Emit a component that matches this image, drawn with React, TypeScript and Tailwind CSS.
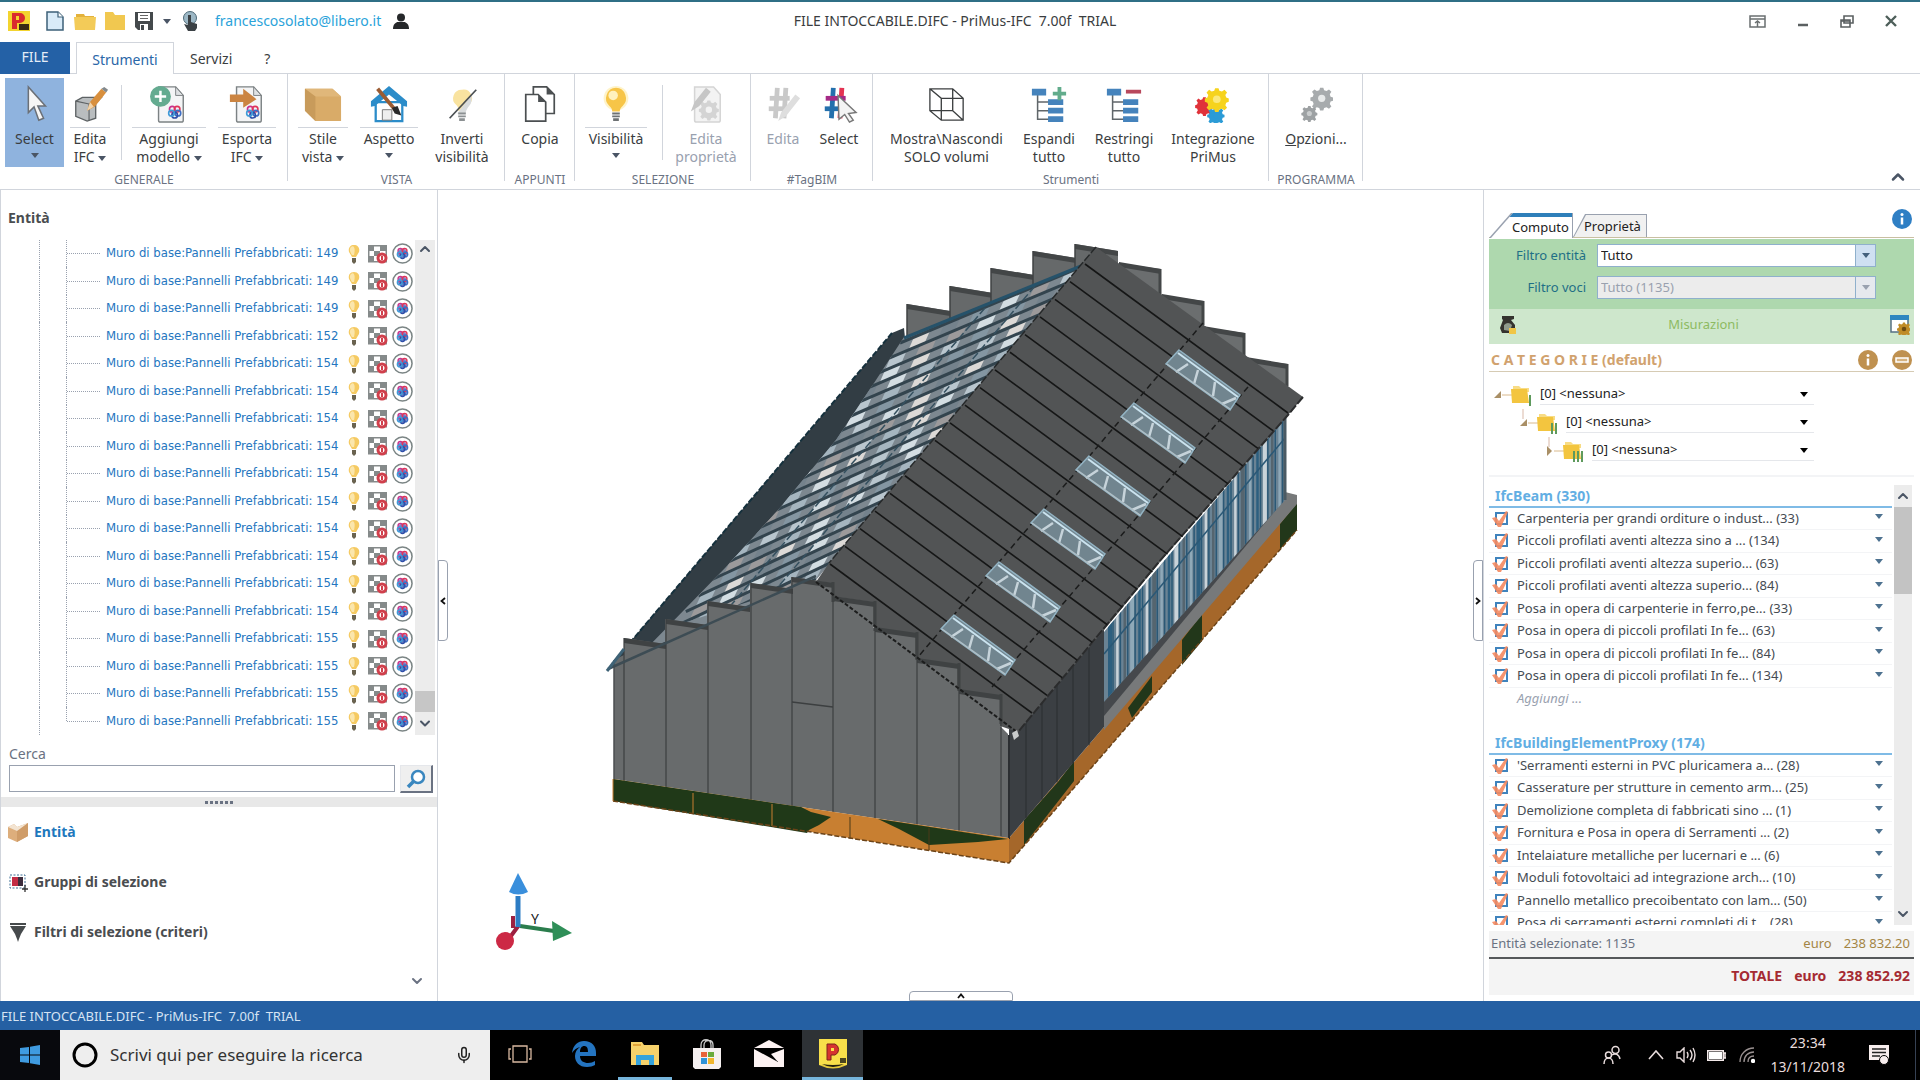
import { ReactNode } from 'react'
import { ChevronDown, ChevronUp, Mic } from 'lucide-react'

type Item = { text: string; count: number }

const walls = [149, 149, 149, 152, 154, 154, 154, 154, 154, 154, 154, 154, 154, 154, 155, 155, 155, 155]

const beams: Item[] = [
  { text: 'Carpenteria per grandi orditure o indust...', count: 33 },
  { text: 'Piccoli profilati aventi altezza sino a ...', count: 134 },
  { text: 'Piccoli profilati aventi altezza superio...', count: 63 },
  { text: 'Piccoli profilati aventi altezza superio...', count: 84 },
  { text: 'Posa in opera di carpenterie in ferro,pe...', count: 33 },
  { text: 'Posa in opera di piccoli profilati In fe...', count: 63 },
  { text: 'Posa in opera di piccoli profilati In fe...', count: 84 },
  { text: 'Posa in opera di piccoli profilati In fe...', count: 134 },
]

const proxies: Item[] = [
  { text: "'Serramenti esterni in PVC pluricamera a...", count: 28 },
  { text: 'Casserature per strutture in cemento arm...', count: 25 },
  { text: 'Demolizione completa di fabbricati sino ...', count: 1 },
  { text: 'Fornitura e Posa in opera di Serramenti ...', count: 2 },
  { text: 'Intelaiature metalliche per lucernari e ...', count: 6 },
  { text: 'Moduli fotovoltaici ad integrazione arch...', count: 10 },
  { text: 'Pannello metallico precoibentato con lam...', count: 50 },
  { text: 'Posa di serramenti esterni completi di t...', count: 28 },
]

const Caret = ({ className = 'fill-gray-600' }: { className?: string }) => (
  <svg viewBox="0 0 8 5" className={`inline-block h-[5px] w-2 align-middle ${className}`}>
    <path d="M0 0h8L4 5z" />
  </svg>
)

/* ---------- ribbon icons ---------- */

const Rosette = ({ x, y, s = 1 }: { x: number; y: number; s?: number }) => (
  <g transform={`translate(${x} ${y}) scale(${s})`} fill="none" strokeWidth="2">
    <circle cx="-3" cy="-3" r="3.5" stroke="#c8328c" />
    <circle cx="3" cy="-3" r="3.5" stroke="#e0355a" />
    <circle cx="4" cy="2" r="3.5" stroke="#3c6fc4" />
    <circle cx="0" cy="4.5" r="3.5" stroke="#2f4fa8" />
    <circle cx="-4" cy="2" r="3.5" stroke="#3f9bd8" />
  </g>
)

const Ico = ({ children }: { children: ReactNode }) => (
  <svg viewBox="0 0 40 40" className="h-[38px] w-[38px]">
    {children}
  </svg>
)

const Cursor = () => (
  <Ico>
    <path d="M13 2v27l6-6 5 14 5-2-6-13h8z" fill="#f6f6f6" stroke="#6b7077" strokeWidth="1.6" />
  </Ico>
)

const BoxPencil = () => (
  <Ico>
    <path d="M5 17l7-4h20l-6 6v16l-9 3-12-5z" fill="#b9bdbf" stroke="#5d6264" strokeWidth="1.4" />
    <path d="M5 17l14 3 12-6M19 20v17" stroke="#5d6264" strokeWidth="1.2" fill="none" />
    <path d="M17 27l3-9L32 4l5 4-12 15z" fill="#d88f3d" />
    <path d="M32 4l3-2 4 3-2 3z" fill="#83898c" />
    <path d="M17 27l3-9 4 5z" fill="#f2d3a8" />
  </Ico>
)

const Sheet = () => (
  <>
    <path d="M9 2h18l8 9v26a2 2 0 0 1-2 2H11a2 2 0 0 1-2-2z" fill="#f4f5f6" stroke="#7c8284" strokeWidth="1.5" />
    <path d="M27 2v9h8z" fill="#dfe2e4" stroke="#7c8284" />
    <Rosette x={26} y={28} s={0.85} />
  </>
)

const AddModel = () => (
  <Ico>
    <Sheet />
    <circle cx="11" cy="12" r="11" fill="#64ab90" />
    <path d="M11 6v12M5 12h12" stroke="#fff" strokeWidth="2.6" />
  </Ico>
)

const ExportIfc = () => (
  <Ico>
    <Sheet />
    <path d="M2 10h14V4l14 11-14 9v-6H2z" fill="#cb8441" />
  </Ico>
)

const StyleBox = () => (
  <Ico>
    <path d="M1 4h29l9 8v26H12L1 27z" fill="#d9ab68" />
    <path d="M1 4h29l9 8H12z" fill="#e0b77a" />
    <path d="M1 4l11 8v26L1 27z" fill="#c89b5b" />
  </Ico>
)

const House = () => (
  <Ico>
    <path d="M6 18h28v20H6z" fill="#fff" stroke="#2b8cc9" strokeWidth="2.4" />
    <path d="M20 1L1 17v6l4-1 15-12 15 12 4 1v-6z" fill="#2b8cc9" />
    <path d="M13 26h10v11H13z" fill="#eee" stroke="#777" />
    <path d="M8 4l20 24" stroke="#9b5c33" strokeWidth="4" />
    <path d="M23 24l6-2 4 10-7-2z" fill="#2a2a2a" />
  </Ico>
)

const Bulb = () => (
  <Ico>
    <circle cx="20" cy="14" r="13" fill="#fdeeb4" opacity=".7" />
    <path d="M20 3a11 11 0 0 0-7 19c2 2 3 3 3 6h8c0-3 1-4 3-6A11 11 0 0 0 20 3z" fill="#f7c548" />
    <circle cx="17" cy="11" r="5" fill="#fff1bd" />
    <path d="M16 29h8v2h-8zM16 32h8v2h-8zM17 35h6v3h-6z" fill="#6d7173" />
  </Ico>
)

const InvertBulb = () => (
  <Ico>
    <path d="M20 5a9 9 0 0 0-6 16c2 2 2 3 2 6h8c0-3 1-4 3-6A9 9 0 0 0 20 5z" fill="#f9e3a0" />
    <path d="M30 10L15 30h9c0-6 5-8 6-13z" fill="#d9dcdd" />
    <path d="M16 29h8v2h-8zM16 32h8v2h-8zM17 35h6v3h-6z" fill="#8b9092" />
    <path d="M35 5L7 35" stroke="#4a4f52" strokeWidth="1.8" />
  </Ico>
)

const Copy = () => (
  <Ico>
    <path d="M13 2h14l8 8v20H13z" fill="#fff" stroke="#4b4f51" strokeWidth="1.8" />
    <path d="M27 2v8h8z" fill="#4b4f51" />
    <path d="M5 10h13l8 8v20H5z" fill="#fff" stroke="#4b4f51" strokeWidth="1.8" />
    <path d="M18 10v8h8z" fill="#4b4f51" />
  </Ico>
)

const cog = 'M-2-10h4l1 3 3 1 3-2 3 3-2 3 1 3 3 1v4l-3 1-1 3 2 3-3 3-3-2-3 1-1 3h-4l-1-3-3-1-3 2-3-3 2-3-1-3-3-1v-4l3-1 1-3-2-3 3-3 3 2 3-1z'
const Cog = ({ x, y, s, fill, hole = '#fff' }: { x: number; y: number; s: number; fill: string; hole?: string }) => (
  <g transform={`translate(${x} ${y}) scale(${s})`}>
    <path d={cog} fill={fill} transform="translate(0 -3)" />
    <circle r="4.5" fill={hole} />
  </g>
)

const EditProps = () => (
  <Ico>
    <path d="M8 2h20l7 8v27a2 2 0 0 1-2 2H10a2 2 0 0 1-2-2z" fill="#f3f3f3" stroke="#d5d5d5" strokeWidth="1.6" />
    <Cog x={23} y={26} s={0.75} fill="#d4d4d4" hole="#f3f3f3" />
    <path d="M4 28l4-10L20 3l5 4L13 22z" fill="#c6c6c6" />
  </Ico>
)

const Hash = ({ a, b, c }: { a: string; b: string; c: string }) => (
  <>
    <path d="M14 3l-2 32" stroke={a} strokeWidth="5" />
    <path d="M23 3l-2 32" stroke={b} strokeWidth="5" />
    <path d="M6 14h21" stroke={c} strokeWidth="5" />
    <path d="M5 25h21" stroke={a} strokeWidth="5" />
  </>
)

const HashEdit = () => (
  <Ico>
    <Hash a="#c9c9c9" b="#c9c9c9" c="#c9c9c9" />
    <path d="M15 38l3-9L33 10l5 4-15 19z" fill="#dedede" />
  </Ico>
)

const HashSelect = () => (
  <Ico>
    <Hash a="#2470ad" b="#e43352" c="#a52a86" />
    <path d="M19 11l19 18-8 1 5 7-4 2-5-8-6 5z" fill="#f4f4f4" stroke="#777" strokeWidth="1.5" />
  </Ico>
)

const Cube = () => (
  <Ico>
    <path
      d="M2 4h24l11 10v23H14L2 27zM26 4v23l11 10M2 27h24M2 4l12 10h23M14 14v23"
      fill="none"
      stroke="#3c3f40"
      strokeWidth="1.4"
    />
  </Ico>
)

const Tree = ({ children }: { children: ReactNode }) => (
  <Ico>
    <path d="M8 9v27h12M8 18h12M8 27h12" fill="none" stroke="#60666a" strokeWidth="1.6" />
    <path d="M2 4h15v7H2zM19 15h16v6H19zM19 24h16v6H19zM19 33h16v6H19z" fill="#4583bc" />
    {children}
  </Ico>
)

const Integration = () => (
  <Ico>
    <Cog x={11} y={22} s={0.7} fill="#e0323a" hole="#e0323a" />
    <Cog x={23} y={32} s={0.65} fill="#2b9bd6" hole="#2b9bd6" />
    <Cog x={24} y={15} s={0.9} fill="#f6d31d" hole="#fbe97c" />
  </Ico>
)

const Options = () => (
  <Ico>
    <Cog x={26} y={14} s={0.85} fill="#a7abad" hole="#e8eaea" />
    <Cog x={13} y={30} s={0.6} fill="#9da1a3" hole="#c9cccd" />
  </Ico>
)

/* ---------- ribbon ---------- */

type ToolProps = {
  icon: ReactNode
  lines: ReactNode[]
  width: string
  menu?: 'split' | 'plain'
  active?: boolean
  disabled?: boolean
}

function Tool({ icon, lines, width, menu, active, disabled }: ToolProps) {
  return (
    <button
      disabled={disabled}
      className={`flex h-[89px] flex-col items-center text-sm leading-[18px] ${width} ${
        active ? 'bg-[#8fb3de]' : ''
      } ${disabled ? 'text-gray-400' : 'text-[#3a3d40]'}`}
    >
      <span className="flex h-[49px] items-center pt-[2px]">{icon}</span>
      <span className={`border-t px-1 pt-[2px] whitespace-nowrap ${menu === 'split' ? 'border-gray-300' : 'border-transparent'}`}>
        {lines.map((l, i) => (
          <span key={i} className="block">
            {l}
            {menu && i === 1 && <> <Caret /></>}
          </span>
        ))}
        {menu && lines.length === 1 && (
          <span className="block text-center leading-3">
            <Caret />
          </span>
        )}
      </span>
    </button>
  )
}

function Group({ label, width, pad = '', children }: { label: string; width: string; pad?: string; children: ReactNode }) {
  return (
    <section className={`relative flex flex-col pt-1 ${width}`}>
      <div className={`flex ${pad}`}>{children}</div>
      <h3 className="text-center text-xs leading-[25px] text-gray-500">{label}</h3>
      <span className="absolute top-0 right-0 h-[107px] w-px bg-gray-300" />
    </section>
  )
}

const Sep = () => <span className="mx-[5px] mt-[7px] h-[75px] w-px bg-gray-300" />

function Ribbon() {
  return (
    <div className="relative flex h-[116px] border-b border-gray-300">
      <Group label="GENERALE" width="w-[288px]" pad="pl-[5px]">
        <Tool icon={<Cursor />} lines={['Select']} width="w-[59px]" menu="plain" active />
        <Tool icon={<BoxPencil />} lines={['Edita', 'IFC']} width="w-[52px]" menu="split" />
        <Sep />
        <Tool icon={<AddModel />} lines={['Aggiungi', 'modello']} width="w-[84px]" menu="split" />
        <Tool icon={<ExportIfc />} lines={['Esporta', 'IFC']} width="w-[72px]" menu="split" />
      </Group>
      <Group label="VISTA" width="w-[217px]" pad="pl-1">
        <Tool icon={<StyleBox />} lines={['Stile', 'vista']} width="w-[62px]" menu="split" />
        <Tool icon={<House />} lines={['Aspetto']} width="w-[70px]" menu="split" />
        <Tool icon={<InvertBulb />} lines={['Inverti', 'visibilità']} width="w-[76px]" />
      </Group>
      <Group label="APPUNTI" width="w-[70px]">
        <Tool icon={<Copy />} lines={['Copia']} width="w-full" />
      </Group>
      <Group label="SELEZIONE" width="w-[176px]">
        <Tool icon={<Bulb />} lines={['Visibilità']} width="w-[82px]" menu="split" />
        <Sep />
        <Tool icon={<EditProps />} lines={['Edita', 'proprietà']} width="w-[76px]" disabled />
      </Group>
      <Group label="#TagBIM" width="w-[122px]" pad="pl-1">
        <Tool icon={<HashEdit />} lines={['Edita']} width="w-14" disabled />
        <Tool icon={<HashSelect />} lines={['Select']} width="w-14" />
      </Group>
      <Group label="Strumenti" width="w-[396px]" pad="pl-2">
        <Tool icon={<Cube />} lines={['Mostra\\Nascondi', 'SOLO volumi']} width="w-[131px]" />
        <Tool
          icon={
            <Tree>
              <path d="M31 2v14M24 9h14" stroke="#62ac8c" strokeWidth="4" />
            </Tree>
          }
          lines={['Espandi', 'tutto']}
          width="w-[74px]"
        />
        <Tool
          icon={
            <Tree>
              <path d="M22 7h16" stroke="#b8485c" strokeWidth="4" />
            </Tree>
          }
          lines={['Restringi', 'tutto']}
          width="w-[76px]"
        />
        <Tool icon={<Integration />} lines={['Integrazione', 'PriMus']} width="w-[102px]" />
      </Group>
      <Group label="PROGRAMMA" width="w-[94px]">
        <Tool
          icon={<Options />}
          lines={[
            <>
              <u>O</u>pzioni...
            </>,
          ]}
          width="w-full"
        />
      </Group>
      <button aria-label="Riduci barra" className="mr-3 mb-[2px] ml-auto self-end">
        <ChevronUp className="h-5 w-5 text-gray-600" strokeWidth={3} />
      </button>
    </div>
  )
}

function TitleBar() {
  return (
    <div className="grid h-[38px] grid-cols-3 items-center pr-[22px] pl-2">
      <div className="flex items-center">
        <svg viewBox="0 0 22 20" className="h-5 w-[22px]">
          <path d="M0 0h22v20H0z" fill="#f3d42f" />
          <path d="M4 2h8a5 5 0 0 1 0 10H9v6H4z" fill="#d92a2e" />
          <path d="M8 5h3v4H8z" fill="#f3d42f" />
          <path d="M11 13h10v6H11z" fill="#3a2b14" />
        </svg>
        <svg viewBox="0 0 18 20" className="ml-4 h-5 w-[18px]">
          <path d="M1 1h11l5 5v13H1z" fill="#d9ebf8" stroke="#3d6078" strokeWidth="1.5" />
          <path d="M12 1v5h5" fill="#fff" stroke="#3d6078" strokeWidth="1.2" />
        </svg>
        <svg viewBox="0 0 22 18" className="ml-[10px] h-[18px] w-[22px]">
          <path d="M2 2h8l1 2h9v4H2z" fill="#e3b23c" />
          <path d="M0 5h22l-1 13H1z" fill="#f3cb58" />
        </svg>
        <svg viewBox="0 0 22 18" className="ml-2 h-[18px] w-[22px]">
          <path d="M1 0h8l2 3h10v15H1z" fill="#f1c850" />
        </svg>
        <svg viewBox="0 0 18 18" className="ml-[9px] h-[18px] w-[18px]">
          <path d="M0 0h18v18H3l-3-3z" fill="#44494c" />
          <path d="M3 1h12v8H3z" fill="#fff" />
          <path d="M5 3h8v1H5zM5 6h8v1H5z" fill="#666" />
          <path d="M5 12h8v6H5z" fill="#fff" />
          <path d="M6 13h3v5H6z" fill="#44494c" />
        </svg>
        <span className="ml-[10px] flex items-center">
          <Caret />
        </span>
        <svg viewBox="0 0 18 20" className="ml-[10px] h-5 w-[18px]">
          <circle cx="9" cy="7" r="6.5" fill="#9db8c6" stroke="#4e6a78" />
          <path d="M7 4h3v7l6 2v4l-2 3H7l-4-7 4 1z" fill="#3b4145" />
        </svg>
        <a href="#account" className="ml-4 text-sm text-[#2ba3da]">
          francescosolato@libero.it
        </a>
        <svg viewBox="0 0 16 16" className="ml-3 h-4 w-4" fill="#26282a">
          <circle cx="8" cy="4.500" r="4" />
          <path d="M0 16c0-5 3-7 5-7h6c2 0 5 2 5 7z" />
        </svg>
      </div>
      <h1 className="pl-1 text-center text-sm whitespace-pre text-[#3a3d40]">FILE INTOCCABILE.DIFC - PriMus-IFC  7.00f  TRIAL</h1>
      <div className="flex items-center justify-end gap-[30px]">
        <button aria-label="Comprimi">
          <svg viewBox="0 0 17 13" className="block h-[13px] w-[17px]" fill="none" stroke="#6a6f70" strokeWidth="1.5">
            <path d="M1 1h15v11H1zM1 4h15M8.500 12V6M6 8l2.500-2L11 8" />
          </svg>
        </button>
        <button aria-label="Riduci a icona">
          <svg viewBox="0 0 14 14" className="block h-[14px] w-[14px]" stroke="#5b6061" strokeWidth="2.500">
            <path d="M2 11h10" />
          </svg>
        </button>
        <button aria-label="Ripristina">
          <svg viewBox="0 0 14 13" className="block h-[13px] w-[14px]" fill="#fff" stroke="#5b6061" strokeWidth="1.600">
            <path d="M4 1h9v7H4zM1 5h9v7H1z" />
            <path d="M1 6h9" />
          </svg>
        </button>
        <button aria-label="Chiudi">
          <svg viewBox="0 0 14 14" className="block h-[14px] w-[14px]" stroke="#4e5f5a" strokeWidth="2.400">
            <path d="M2 2l10 10M12 2L2 12" />
          </svg>
        </button>
      </div>
    </div>
  )
}

/* ---------- left panel ---------- */

const WallRow = ({ id, last }: { id: number; last: boolean }) => (
  <li className="flex h-[27px] items-center even:h-7">
    <span className="w-10 self-stretch border-r border-dotted border-gray-400" />
    <span className={`w-[27px] border-r border-dotted border-gray-400 ${last ? 'h-1/2 self-start' : 'self-stretch'}`} />
    <span className="w-[33px] border-t border-dotted border-gray-400" />
    <a href="#wall" className="ml-[6px] w-[235px] shrink-0 font-[DejaVu_Sans_Condensed,sans-serif] text-[13px] whitespace-nowrap text-[#2576c0]">
      Muro di base:Pannelli Prefabbricati: {id}
    </a>
    <svg viewBox="0 0 12 20" className="ml-[7px] h-5 w-3">
      <path d="M6 1C2 1 0 4 1 8l3 5h4l3-5c1-4-1-7-5-7z" fill="#f5ca62" />
      <path d="M3 3c2-2 5 0 3 8H4C2 8 1 5 3 3z" fill="#fbe6ac" />
      <path d="M4 14h4v4l-2 2-2-2z" fill="#6a6350" />
    </svg>
    <svg viewBox="0 0 20 20" className="ml-2 h-5 w-5">
      <path d="M.75 1.750h17.500v16H.75z" fill="#fff" stroke="#858a8a" strokeWidth="1.500" />
      <path d="M0 1h6v6H0zM12 1h7v6h-7zM6 7h6v5H6zM0 12h6v6H0z" fill="#858a8a" />
      <circle cx="14" cy="14" r="4" fill="#fff" stroke="#d0404c" strokeWidth="3" />
      <path d="M13 12h2v4h-2z" fill="#d0404c" />
    </svg>
    <svg viewBox="0 0 22 22" className="ml-1 h-[21px] w-[21px]">
      <circle cx="11" cy="11" r="10" fill="#fff" stroke="#7b8585" strokeWidth="1.600" />
      <circle cx="11" cy="11" r="5" fill="#7c86c8" />
      <Rosette x={11} y={10.500} s={0.72} />
    </svg>
  </li>
)

function LeftPanel() {
  return (
    <aside className="flex w-[438px] shrink-0 flex-col border-x border-gray-300 text-sm">
      <h2 className="h-[50px] pt-[18px] pl-[7px] font-bold text-[#4a4d50]">Entità</h2>
      <div className="flex min-h-0 flex-1">
        <ul className="-ml-px flex-1 overflow-hidden">
          {walls.map((id, i) => (
            <WallRow key={i} id={id} last={i === walls.length - 1} />
          ))}
        </ul>
        <div className="mr-[2px] flex w-5 flex-col items-center bg-[#ececec]">
          <ChevronUp className="h-[18px] w-4 text-gray-600" strokeWidth={3} />
          <span className="mt-auto h-[21px] w-full bg-[#c6c6c6]" />
          <ChevronDown className="h-[23px] w-4 text-gray-600" strokeWidth={3} />
        </div>
      </div>
      <form className="h-[62px] pt-2 pr-1 pl-2">
        <label htmlFor="cerca" className="block leading-[22px] text-gray-500">
          Cerca
        </label>
        <div className="flex gap-[5px]">
          <input id="cerca" className="h-[27px] flex-1 border border-gray-400 bg-white px-1 outline-none" />
          <button type="button" aria-label="Cerca" className="flex h-7 w-[33px] items-center justify-center border border-r-2 border-b-2 border-gray-200 border-r-gray-500 border-b-gray-500 bg-[#efefef]">
            <svg viewBox="0 0 20 20" className="h-5 w-5" fill="#fff" stroke="#3a87bf" strokeWidth="2.500">
              <circle cx="12" cy="8" r="6" />
              <path d="M7.500 12.500L2 18" strokeWidth="3.500" />
            </svg>
          </button>
        </div>
      </form>
      <div className="flex h-[10px] items-center justify-center gap-[2px] bg-[#e8e8e8]">
        {[0, 1, 2, 3, 4, 5].map((d) => (
          <span key={d} className="h-[3px] w-[3px] bg-gray-500" />
        ))}
      </div>
      <nav className="flex flex-col font-bold text-[#4a4d50]">
        <a href="#entita" className="flex h-[50px] items-center gap-[6px] pl-[7px] text-[#1e78bd]">
          <svg viewBox="0 0 20 20" className="h-5 w-5">
            <path d="M0 5l6-3 3 3 11-4v13L9 20 0 16z" fill="#ddae7c" />
            <path d="M0 5l6-3 3 3 11-4-9 8H9z" fill="#f3e4d2" />
            <path d="M9 9v11l11-6V1z" fill="#cf9c68" />
          </svg>
          Entità
        </a>
        <a href="#gruppi" className="flex h-[50px] items-center gap-[6px] pl-[7px]">
          <svg viewBox="0 0 20 20" className="h-5 w-5">
            <path d="M2 3h15v13H2z" fill="none" stroke="#3d6e94" strokeDasharray="2 1.500" />
            <path d="M4 5h11v9H4z" fill="#3c2c3c" />
            <path d="M4 5h6v9H4z" fill="#c22c44" />
            <path d="M17 13v7M14 17h6" stroke="#333" strokeWidth="1.300" />
          </svg>
          Gruppi di selezione
        </a>
        <a href="#filtri" className="flex h-[50px] items-center gap-[6px] pl-[7px]">
          <svg viewBox="0 0 20 20" className="h-5 w-5" fill="#464a4c">
            <path d="M2 1h16v2H2zM2 4h16l-5 8H7zM7 12h6l-2 5-1 3-1-3z" />
          </svg>
          Filtri di selezione (criteri)
        </a>
      </nav>
      <button aria-label="Altro" className="flex h-11 items-center self-end pt-1 pr-3">
        <ChevronDown className="h-4 w-4 text-gray-500" strokeWidth={3} />
      </button>
    </aside>
  )
}

/* ---------- 3D view ---------- */

const seams = Array.from({ length: 18 }, (_, i) => {
  const t = i / 17
  return [1085 - 255 * t, 264 + 300 * t, 1288 - 256 * t, 413 + 300 * t]
})

// where each glazing beam leaves the ridge and reaches the gutter
const glazing = Array.from({ length: 21 }, (_, i) => {
  const t = i / 20
  return { x1: 1081 - 265 * t, y1: 267 + 312 * t, x2: 900 - 252 * t, y2: 343 + 316 * t }
})

const tones = ['#b9c6ce', '#dcd9d6', '#8496a2', '#9c9a9b', '#a5b5bf', '#74828c', '#d3dde2']

const panes = glazing.slice(0, -1).flatMap((g, i) => {
  const n = glazing[i + 1]
  return Array.from({ length: 6 }, (_, k) => {
    const a = k / 6 + ((i * 3) % 5) / 50
    const b = a + 0.09
    const p = (q: typeof g, t: number) => `${q.x1 + (q.x2 - q.x1) * t},${q.y1 + (q.y2 - q.y1) * t}`
    return { pts: `${p(g, a)} ${p(g, b)} ${p(n, b - 0.04)} ${p(n, a - 0.04)}`, fill: tones[(i * 5 + k * 3 + ((i * k) % 4)) % 7] }
  })
})

const rearLeft = [
  [907, 304, 40],
  [950, 286, 50],
  [991, 268, 60],
  [1033, 251, 60],
  [1075, 244, 40],
]

const rearRight = [
  [1119, 262, 36],
  [1162, 294, 32],
  [1203, 326, 32],
  [1246, 357, 30],
]

const gable = [
  [624, 638],
  [666, 619],
  [708, 601],
  [751, 583],
  [792, 577],
  [833, 596],
  [875, 627],
  [917, 658],
  [959, 689],
]

const mullions = Array.from({ length: 24 }, (_, i) => i / 24)

function Viewer() {
  return (
    <main className="relative min-w-0 flex-1">
      <svg viewBox="438 190 1045 811" className="h-full w-full">
        <defs>
          <clipPath id="glass">
            <path d="M1082 266L904 337 876 380 836 440 778 510 725 568 668 628 816 580z" />
          </clipPath>
          <clipPath id="side">
            <path d="M1104 632L1285 418v82L1104 702z" />
          </clipPath>
        </defs>

        {rearLeft.map(([x, y, h]) => (
          <g key={x}>
            <path d={`M${x} ${y}l43 7v${h + 50}l-43 10z`} fill="#66696a" />
            <path d={`M${x} ${y}l43 7v5l-43-7z`} fill="#434647" />
            <path d={`M${x} ${y}v${h}`} stroke="#3f4243" strokeWidth="1.500" />
          </g>
        ))}
        {rearRight.map(([x, y, h]) => (
          <g key={x}>
            <path d={`M${x - 12} ${y}l54 7v${h}l-54-30z`} fill="#6b6e6f" />
            <path d={`M${x} ${y}l42 7v5l-42-7z`} fill="#434647" />
            <path d={`M${x + 41} ${y + 7}v${h - 8}`} stroke="#434647" strokeWidth="3" />
          </g>
        ))}

        {/* gutter and glazed slope */}
        <path d="M904 328l-12 5L608 668l60-20 240-280z" fill="#323d44" />
        <path d="M892 333L612 664" stroke="#16313d" strokeWidth="2" strokeDasharray="6 2" />
        <path d="M1082 266L904 337 876 380 836 440 778 510 725 568 645 650 816 580z" fill="#7d8890" />
        <g clipPath="url(#glass)">
          {panes.map((p, i) => (
            <polygon key={i} points={p.pts} fill={p.fill} />
          ))}
          {glazing.map((g, i) => (
            <line key={i} x1={g.x1} y1={g.y1} x2={g.x2} y2={g.y2} stroke="#33444e" strokeWidth="3" />
          ))}
          <path d="M985 308L720 618M1035 286L772 594" stroke="#35505f" strokeWidth="1.500" strokeDasharray="8 3" fill="none" />
        </g>
        <path d="M1081 266L904 338" stroke="#26526a" strokeWidth="3" />

        {/* long side */}
        <path d="M1009 838L1104 727 1297 503v27L1009 863z" fill="#a5672a" />
        <path d="M1024 820l34-38 16-21v20l-50 64zM1128 708l24-32v16l-20 26zM1182 640l20-26v27l-20 24zM1280 524l17-21v27l-17 19z" fill="#22371a" />
        <path d="M1104 700L1285 492l12 3v9L1104 730z" fill="#77797a" />
        <path d="M1104 690L1285 485v14L1104 716z" fill="#45484c" />
        <path d="M1009 838V724l95-100v103z" fill="#3b3f43" />
        {[1026, 1042, 1057, 1073, 1089].map((x) => (
          <path key={x} d={`M${x} ${1706 - x + 6}V${838 - (x - 1009) * 1.160}`} stroke="#2b2e31" />
        ))}
        <path d="M1104 632L1285 418v82L1104 702z" fill="#6a8394" />
        <g clipPath="url(#side)">
          {mullions.map((t, i) => (
            <g key={i}>
              <path d={`M${1110 + 177 * t} 400v320`} stroke={['#2d5f7f', '#c9d3d9', '#55656f', '#8fa9b8'][i % 4]} strokeWidth={i % 3 === 0 ? 4 : 2.500} />
              <path d={`M${1113 + 177 * t} 400v320`} stroke="#2a5876" strokeWidth="1.500" />
            </g>
          ))}
          <path d="M1104 654L1285 438" stroke="#2a5876" strokeWidth="1.500" />
        </g>
        <path d="M1285 410v90" stroke="#4b5a63" strokeWidth="3" />

        {/* metal slope */}
        <path d="M1096 247L1303 397 1288 415 1160 562 1104 630 1018 732 1000 726 816 582 829 563z" fill="#525455" />
        <path d="M1303 397l-15 18-130 148-140 169" stroke="#2b2c2d" strokeWidth="2" strokeDasharray="9 2" fill="none" />
        <path d="M1096 247L829 563" stroke="#26292a" strokeWidth="1.500" strokeDasharray="8 2" />
        {seams.map(([x1, y1, x2, y2]) => (
          <line key={x1} x1={x1} y1={y1} x2={x2} y2={y2} stroke="#151616" strokeWidth="1.600" />
        ))}
        <path d="M1203 323L918 657M1248 387L992 687" stroke="#1b1c1c" strokeWidth="1.500" strokeDasharray="6 4" fill="none" />
        {[0, 1, 2, 3, 4, 5].map((i) => (
          <g key={i} transform={`translate(${-45 * i} ${53 * i})`}>
            <path d="M1179 350l61 45-10 15-64-46z" fill="#71858f" stroke="#93b4c4" strokeWidth="1.500" />
            <path d="M1178 353l60 44" stroke="#cbe3ef" strokeWidth="2" />
            <path d="M1176 372l12-8M1194 384l4-14M1213 396l2-14M1222 404l14-6" stroke="#c6d3da" strokeWidth="2.500" />
            <path d="M1167 364l63 45" stroke="#b0bfc6" strokeWidth="1.500" />
          </g>
        ))}

        {/* gable wall */}
        <path d="M614 660l10-5V638l41 6v-25l42 6v-24l43 6v-24l41 6v-12l41 6v13l41 6v26l42 6v25l42 6v25l43 6v30l8 8V838L614 779z" fill="#686b6c" />
        {gable.map(([x, y]) => (
          <g key={x}>
            <path d={`M${x} ${y}l42 6v5l-42-6z`} fill="#3f4243" />
            <path d={`M${x} ${y}V${781 + (x - 614) * 0.149}`} stroke="#3c3f40" strokeWidth="1.200" />
          </g>
        ))}
        <path d="M833 582v20M875 601v30M917 632v28M959 663v28M1001 694v30" stroke="#3f4243" strokeWidth="3" />
        <path d="M1001 724v112" stroke="#3c3f40" strokeWidth="1.200" />
        <path d="M792 702l41 5" stroke="#3c3f40" strokeWidth="1.300" />
        <path d="M614 660v120" stroke="#4b4e50" strokeWidth="1.500" />
        <path d="M608 669L816 576" stroke="#3d4c54" strokeWidth="2.500" />
        <path d="M607 671l17-22" stroke="#3e6276" strokeWidth="3" />
        <path d="M816 582l201 150" stroke="#1c1d1d" strokeWidth="2" strokeDasharray="4 2" />
        <path d="M1012 733l5-3 2 6-5 4z" fill="#c9cccc" />
        <path d="M1009 735v104" stroke="#2b2e31" strokeWidth="2" />

        {/* foundation */}
        <path d="M613 779L1009 838v25L613 801z" fill="#c87f31" />
        <path d="M613 779l188 28 10 5 20 5-12 8-10 5-2 3L613 801z" fill="#203918" />
        <path d="M878 819l130 20-30 3-49 3-30-16z" fill="#203918" />
        <path d="M693 793v20M772 804v22" stroke="#c87f31" />
        <path d="M850 817v22M929 828v22" stroke="#4a3a18" />
        <path d="M613 801L1009 863 1297 530" stroke="#6b4318" strokeWidth="1.500" strokeDasharray="5 2" fill="none" />
        <path d="M613 779v22" stroke="#c87f31" />

        {/* axes */}
        <path d="M519 925l-11 15M513 916v12" stroke="#9c2040" strokeWidth="4" />
        <path d="M520 926l34 5" stroke="#2b7d4d" strokeWidth="4" />
        <path d="M552 921l20 12-19 8z" fill="#2f8f58" />
        <path d="M518 896v31" stroke="#2c7cc4" strokeWidth="5" />
        <path d="M518 873l10 19q-10 5-19 0z" fill="#3a8fdc" />
        <circle cx="505" cy="941" r="9" fill="#cc2945" />
        <text x="531" y="924" fontSize="14" fill="#1a1a1a" fontFamily="Noto Sans, sans-serif">
          Y
        </text>
      </svg>
      <button aria-label="Chiudi pannello sinistro" className="absolute top-[370px] left-0 flex h-[81px] w-[10px] items-center justify-center rounded-r border border-gray-400 bg-white">
        <svg viewBox="0 0 6 8" className="h-2 w-[6px]" fill="none" stroke="#111" strokeWidth="1.800">
          <path d="M5 1L1.500 4 5 7" />
        </svg>
      </button>
      <button aria-label="Chiudi pannello destro" className="absolute top-[370px] right-0 flex h-[81px] w-[10px] items-center justify-center rounded-l border border-gray-400 bg-white">
        <svg viewBox="0 0 6 8" className="h-2 w-[6px]" fill="none" stroke="#111" strokeWidth="1.800">
          <path d="M1 1l3.500 3L1 7" />
        </svg>
      </button>
      <button aria-label="Apri pannello inferiore" className="absolute bottom-0 left-1/2 flex h-[10px] w-[104px] -translate-x-1/2 items-center justify-center rounded-t border border-gray-400 bg-white">
        <svg viewBox="0 0 8 6" className="h-[6px] w-2" fill="none" stroke="#111" strokeWidth="1.800">
          <path d="M1 5l3-3.500L7 5" />
        </svg>
      </button>
    </main>
  )
}

/* ---------- right panel ---------- */

function FilterSelect({ id, label, value, disabled }: { id: string; label: string; value: string; disabled?: boolean }) {
  return (
    <div className="flex items-center">
      <label htmlFor={id} className="w-[97px] text-right text-[#1f6f86]">
        {label}
      </label>
      <div className="relative ml-[11px] h-[23px] w-[279px]">
        <select
          id={id}
          disabled={disabled}
          className={`h-full w-full appearance-none border border-[#8fb0cc] px-[3px] ${disabled ? 'bg-[#ececec] text-gray-400' : 'bg-white text-[#222]'}`}
        >
          <option>{value}</option>
        </select>
        <span className={`pointer-events-none absolute top-0 right-0 flex h-full w-[21px] items-center justify-center border border-[#8fb0cc] ${disabled ? 'bg-[#e6e9ee]' : 'bg-[#cfe0f2]'}`}>
          <Caret className={disabled ? 'fill-gray-400' : 'fill-[#44607c]'} />
        </span>
      </div>
    </div>
  )
}

function CategoryRow({ level, indent, open }: { level: number; indent: string; open: boolean }) {
  return (
    <div className={`flex h-7 items-center ${indent}`}>
      <svg viewBox="0 0 40 27" className="h-[27px] w-10">
        {level > 1 && <path d="M4 0v10" stroke="#d9b9a8" />}
        <path d="M9 14h10" stroke="#d9b98c" />
        <path d={open ? 'M8 10v7H1z' : 'M2 9l5 5-5 5z'} fill="#a98f66" />
        <path d="M20 5h6l2 2h8v4H20z" fill="#f8dc85" />
        <path d="M18 8h16l2 14H19z" fill="#f3c53f" />
        {Array.from({ length: level }, (_, i) => (
          <path key={i} d={`M${37 - i * 4} 14v11`} stroke="#5f9a5d" strokeWidth="2" />
        ))}
      </svg>
      <div className="relative ml-[7px] flex-1">
        <select aria-label={`Categoria livello ${level}`} className="h-[22px] w-full appearance-none border-b border-gray-200 bg-transparent text-[#222]">
          <option>{'[0] <nessuna>'}</option>
        </select>
        <span className="pointer-events-none absolute top-0 right-[6px] flex h-full items-center">
          <Caret className="fill-black" />
        </span>
      </div>
    </div>
  )
}

function ItemGroup({ title, items, add }: { title: string; items: Item[]; add?: boolean }) {
  return (
    <section className="mb-[22px]">
      <h3 className="h-[23px] border-b-2 border-[#7fbbe6] pl-[6px] text-sm leading-[22px] font-bold text-[#62aee3]">{title}</h3>
      <ul>
        {items.map((item, i) => (
          <li key={i} className="flex h-[22px] items-center border-b border-gray-100 even:h-[23px]">
            <label className="flex items-center">
              <span className="relative h-[18px] w-[25px]">
                <input type="checkbox" defaultChecked className="mt-[2px] ml-[6px] block h-[13px] w-[13px] appearance-none border-2 border-[#3f83bd] bg-white" />
                <svg viewBox="0 0 18 18" className="absolute top-0 left-[2px] h-[18px] w-[18px]">
                  <path d="M1 8l4-1 3 4 7-10 2 1-7 15H7z" fill="#f58a5f" opacity=".9" />
                </svg>
              </span>
              <span className="pl-[3px] whitespace-pre text-[#454b52]">{`${item.text} (${item.count})`}</span>
            </label>
            <button aria-label="Apri menu" className="mr-[9px] mb-1 ml-auto flex">
              <Caret className="fill-[#4e7290]" />
            </button>
          </li>
        ))}
      </ul>
      {add && (
        <button className="block h-[22px] pl-7 text-gray-400 italic">Aggiungi ...</button>
      )}
    </section>
  )
}

function RightPanel() {
  return (
    <aside className="flex w-[437px] shrink-0 flex-col border-l border-gray-300 pr-[6px] pb-[6px] pl-[5px] text-[13px]">
      <div className="flex h-12 items-end border-b border-[#c9bfa2]">
        <button className="-mb-px h-[25px] w-[84px] bg-gray-400 pr-px pl-[2px] [clip-path:polygon(22px_0,100%_0,100%_100%,0_100%)]">
          <span className="block h-full border-t-4 border-[#2e7fba] bg-white pl-[21px] text-left leading-[21px] text-[#222] [clip-path:polygon(22px_0,100%_0,100%_100%,0_100%)]">
            Computo
          </span>
        </button>
        <button className="h-[23px] w-[74px] bg-gray-400 pt-px pr-px pl-px [clip-path:polygon(12px_0,100%_0,100%_100%,0_100%)]">
          <span className="block h-full bg-[#f1f1f1] pl-[10px] text-left leading-[23px] text-[#222] [clip-path:polygon(12px_0,100%_0,100%_100%,0_100%)]">
            Proprietà
          </span>
        </button>
        <button aria-label="Informazioni" className="mb-2 ml-auto pr-[2px]">
          <svg viewBox="0 0 20 20" className="block h-5 w-5">
            <circle cx="10" cy="10" r="10" fill="#2f7fc4" />
            <circle cx="10" cy="5.500" r="1.500" fill="#fff" />
            <path d="M10 8.500v7" stroke="#fff" strokeWidth="2.500" />
          </svg>
        </button>
      </div>
      <div className="mt-px flex h-[70px] flex-col gap-[9px] bg-[#aed8ae] pt-[5px]">
        <FilterSelect id="filtro-entita" label="Filtro entità" value="Tutto" />
        <FilterSelect id="filtro-voci" label="Filtro voci" value="Tutto (1135)" disabled />
      </div>
      <div className="flex h-[35px] items-center justify-between bg-[#cee7cc] pr-[4px] pb-[3px] pl-[10px] text-[#8dba62]">
        <svg viewBox="0 0 18 20" className="h-5 w-[18px]">
          <path d="M3 1h12v3l-3 1 4 5v8H3l-2-5 3-8-1-1z" fill="#34332e" />
          <path d="M5 10q4-4 8 0l-2 6-6-1z" fill="#8f9a8c" />
          <path d="M10 13h7v6h-7z" fill="#f0c646" />
        </svg>
        Misurazioni
        <svg viewBox="0 0 20 20" className="h-5 w-5">
          <path d="M1 1h17v16H1z" fill="#fff" stroke="#557083" strokeWidth="1.500" />
          <path d="M0 0h19v5H0z" fill="#2f87c0" />
          <Cog x={14} y={14} s={0.5} fill="#c08c28" hole="#6d4c12" />
        </svg>
      </div>
      <div className="flex h-7 items-center border-b border-[#d6cbb4] pt-1 pl-[2px]">
        <h3 className="text-sm font-bold text-[#d1a26e]">C A T E G O R I E (default)</h3>
        <svg viewBox="0 0 54 20" className="mr-[2px] ml-auto h-5 w-[54px]">
          <circle cx="10" cy="10" r="10" fill="#bf9150" />
          <circle cx="10" cy="5.500" r="1.500" fill="#fff" />
          <path d="M10 8.500v7" stroke="#fff" strokeWidth="2.500" />
          <circle cx="44" cy="10" r="10" fill="#bf9150" />
          <path d="M38 8h12v4H38z" fill="#d6b27d" stroke="#fff" strokeWidth="1.500" />
        </svg>
      </div>
      <div className="flex h-[105px] flex-col border-b-2 border-gray-100 pt-2 pr-[100px]">
        <CategoryRow level={1} indent="pl-[4px]" open />
        <CategoryRow level={2} indent="pl-[30px]" open />
        <CategoryRow level={3} indent="pl-[56px]" open={false} />
      </div>
      <div className="mt-2 flex min-h-0 flex-1">
        <div className="min-w-0 flex-1 overflow-hidden">
          <ItemGroup title="IfcBeam (330)" items={beams} add />
          <ItemGroup title="IfcBuildingElementProxy (174)" items={proxies} />
        </div>
        <div className="mr-[2px] ml-[2px] flex w-[18px] flex-col items-center bg-[#ececec]">
          <ChevronUp className="h-[22px] w-4 shrink-0 text-gray-600" strokeWidth={3} />
          <span className="h-[87px] w-full shrink-0 bg-[#c3c3c3]" />
          <ChevronDown className="mt-auto h-[22px] w-4 shrink-0 text-gray-600" strokeWidth={3} />
        </div>
      </div>
      <footer className="mt-[6px] h-16 bg-[#f4f4f4]">
        <div className="flex h-7 items-center gap-3 border-b-2 border-[#55585a] pr-1 pl-[2px] text-gray-500">
          <span>Entità selezionate: 1135</span>
          <span className="ml-auto text-[#a38544]">euro</span>
          <span className="text-[#a38544]">238 832.20</span>
        </div>
        <p className="flex justify-end gap-3 pr-1 text-sm leading-[34px] font-bold text-[#a52a32]">
          <span>TOTALE</span>
          <span>euro</span>
          <span>238 852.92</span>
        </p>
      </footer>
    </aside>
  )
}

/* ---------- taskbar ---------- */

const TaskApp = ({ label, width, open, active, children }: { label: string; width: string; open?: boolean; active?: boolean; children: ReactNode }) => (
  <button
    aria-label={label}
    className={`flex h-full items-center justify-center border-b-[3px] ${width} ${open ? 'border-[#76b5dc]' : 'border-transparent'} ${active ? 'bg-[#2e3236]' : ''}`}
  >
    {children}
  </button>
)

function Taskbar() {
  return (
    <footer className="flex h-[50px] shrink-0 items-center bg-black text-white">
      <button aria-label="Start" className="flex h-full w-[60px] items-center justify-center bg-[#08090d]">
        <svg viewBox="0 0 20 20" className="h-5 w-5" fill="#3f9be0">
          <path d="M0 3l9-1v7.500H0zM10 1.800L20 0v9.500H10zM0 10.500h9V18l-9-1zM10 10.500h10V20l-10-1.800z" />
        </svg>
      </button>
      <div className="flex h-full w-[430px] items-center bg-[#eeeeee] pr-[17px] pl-3">
        <svg viewBox="0 0 26 26" className="h-[26px] w-[26px]" fill="none" stroke="#000" strokeWidth="3">
          <circle cx="13" cy="13" r="11" />
        </svg>
        <input
          aria-label="Cerca in Windows"
          placeholder="Scrivi qui per eseguire la ricerca"
          className="ml-3 flex-1 bg-transparent text-[17px] text-[#333] outline-none placeholder:text-[#333]"
        />
        <Mic className="h-[22px] w-[18px] text-[#222]" />
      </div>
      <TaskApp label="Visualizzazione attività" width="w-[60px]">
        <svg viewBox="0 0 24 18" className="h-[18px] w-6" fill="none" stroke="#d8b8a0" strokeWidth="1.300">
          <path d="M5 1h14v16H5zM3 4H1v10h2M21 4h2v10h-2" />
        </svg>
      </TaskApp>
      <TaskApp label="Edge" width="w-[68px]">
        <svg viewBox="0 0 24 26" className="h-[26px] w-6" fill="#2474c0">
          <path d="M0 12C1 4 6 0 12 0c8 0 12 5 12 12v3H8c0 5 4 7 8 7 3 0 5-1 7-2v4c-2 1-5 2-8 2-8 0-12-5-12-11 0-4 2-7 5-9-4 1-6 3-8 6zm8-1h8c0-4-1-6-4-6-2 0-4 2-4 6z" />
        </svg>
      </TaskApp>
      <TaskApp label="Esplora file" width="w-[54px]" open>
        <svg viewBox="0 0 28 24" className="h-6 w-7">
          <path d="M0 0h11l2 3h15v20H0z" fill="#f6d26b" />
          <path d="M2 2h8v2H2z" fill="#e0a33a" />
          <path d="M5 13h18v10h-5v-5h-8v5H5z" fill="#35a3dc" />
        </svg>
      </TaskApp>
      <TaskApp label="Store" width="w-[70px]">
        <svg viewBox="0 0 28 30" className="h-[30px] w-7">
          <path d="M8 9V6c0-7 10-7 10 0v3M11 9V6c0-6 9-6 9 0v3" stroke="#ccc" strokeWidth="1.300" fill="none" />
          <path d="M0 9h28v19l-2 2H2l-2-2z" fill="#f5f0f0" />
          <path d="M8 13h6v5H8z" fill="#e8623a" />
          <path d="M15 13h6v5h-6z" fill="#6aaa3c" />
          <path d="M8 19h6v6H8z" fill="#2f93d8" />
          <path d="M15 19h6v6h-6z" fill="#f0b62e" />
        </svg>
      </TaskApp>
      <TaskApp label="Posta" width="w-[60px] pr-[6px]">
        <svg viewBox="0 0 30 27" className="h-[27px] w-[30px]" fill="#fdf3f3">
          <path d="M15 0l15 8H0zM0 9l24 13-7-8 13-5v18H0z" />
        </svg>
      </TaskApp>
      <TaskApp label="PriMus" width="w-[61px]" open active>
        <svg viewBox="0 0 28 30" className="h-[30px] w-7">
          <path d="M0 0h28v26H0z" fill="#f8df4a" />
          <path d="M8 5h8a6 6 0 0 1 0 11h-4v5H8z" fill="#d6332f" stroke="#7d231c" />
          <path d="M12 9h3v3h-3z" fill="#f8df4a" />
          <path d="M0 26h28q-14 7-28 0z" fill="#e5c93c" />
          <path d="M3 25q11 2 22 0-11 6-22 0z" fill="#22200f" />
          <path d="M21 19h6v5h-6z" fill="#4a4520" />
        </svg>
      </TaskApp>
      <div className="ml-auto flex h-full items-center text-[#e8dcdc]">
        <svg viewBox="0 0 18 20" className="h-5 w-[18px]" fill="none" stroke="#e8dcdc" strokeWidth="1.500">
          <circle cx="12.500" cy="5" r="3.500" />
          <circle cx="5.500" cy="10" r="3" />
          <path d="M1 19c0-8 9-8 9 0M9 10c3-2 7-1 8 4" />
        </svg>
        <svg viewBox="0 0 16 10" className="ml-[27px] h-[10px] w-4" fill="none" stroke="#e8dcdc" strokeWidth="1.600">
          <path d="M1 9l7-8 7 8" />
        </svg>
        <svg viewBox="0 0 20 16" className="ml-3 h-4 w-5" fill="none" stroke="#e8dcdc" strokeWidth="1.400">
          <path d="M1 5h3l4-4v14l-4-4H1zM11 5q2 3 0 6M14 3q4 5 0 10M17 1q4 7 0 14" />
        </svg>
        <svg viewBox="0 0 19 11" className="ml-[11px] h-[11px] w-[19px]">
          <path d="M.75.750h15.500v9.500H.75zM17 3h2v5h-2z" fill="none" stroke="#f4eaea" strokeWidth="1.500" />
          <path d="M2 2h13v7H2z" fill="#fff" />
        </svg>
        <svg viewBox="0 0 16 16" className="ml-[13px] h-4 w-4" fill="none" stroke="#9a9191" strokeWidth="1.300">
          <path d="M1 15C1 7 7 1 15 1M5 15c0-6 4-10 10-10M9 15c0-4 2-6 6-6" />
          <circle cx="14" cy="14" r="1.500" fill="#fff" stroke="#fff" />
        </svg>
        <div className="ml-4 text-center text-sm leading-6">
          <p>23:34</p>
          <p>13/11/2018</p>
        </div>
        <svg viewBox="0 0 20 20" className="mr-[26px] ml-6 h-5 w-5">
          <path d="M0 0h20v15h-4v4l-4-4H0z" fill="#f8eeee" />
          <path d="M3 4h14M3 7.500h14M3 11h8" stroke="#222" strokeWidth="1.400" />
          <circle cx="15" cy="15" r="4.500" fill="#f8eeee" stroke="#000" />
        </svg>
        <span className="mr-1 h-full w-px bg-gray-700" />
      </div>
    </footer>
  )
}

export default function App() {
  return (
    <div className="flex h-screen flex-col overflow-hidden border-t-2 border-[#2f6f86] bg-white font-['Noto_Sans',sans-serif]">
      <header className="shrink-0">
        <TitleBar />
        <nav className="mt-[2px] flex h-8 border-b border-gray-300 text-sm text-[#3a3d40]">
          <button className="-mb-px w-[70px] bg-[#2461a6] pb-[2px] text-[#e4edf7]">FILE</button>
          <button className="-mb-px ml-[6px] w-[98px] border border-b-0 border-gray-300 bg-white pt-[2px] text-[#2a67a8]">Strumenti</button>
          <button className="ml-4 pt-[2px]">Servizi</button>
          <button className="ml-8 pt-[2px]">?</button>
        </nav>
        <Ribbon />
      </header>
      <div className="flex min-h-0 flex-1">
        <LeftPanel />
        <Viewer />
        <RightPanel />
      </div>
      <div className="h-[29px] shrink-0 bg-[#2560a3] pl-px text-[13px] leading-[30px] whitespace-pre text-[#d7e4f3]">
        FILE INTOCCABILE.DIFC - PriMus-IFC  7.00f  TRIAL
      </div>
      <Taskbar />
    </div>
  )
}
